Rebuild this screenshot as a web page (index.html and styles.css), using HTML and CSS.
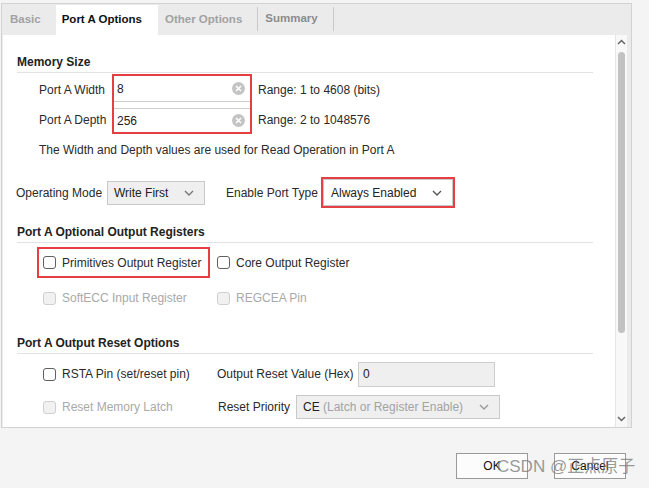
FILE: index.html
```html
<!DOCTYPE html>
<html lang="en">
<head>
    <meta charset="UTF-8">
    <title>Block Memory Generator - Port A Options</title>
    <link rel="stylesheet" href="styles.css">
</head>
<body>
    <div class="dialog">
        <div class="tabs">
            <div class="tab dim">Basic</div>
            <div class="tab active">Port A Options</div>
            <div class="tab dim">Other Options</div>
            <div class="tab dim2">Summary</div>
        </div>

        <div class="pane">
            <div class="content">
                <h2 class="section">Memory Size</h2>
                <div class="mem-grid">
                    <span class="lbl row1">Port A Width</span>
                    <div class="hl mem-box">
                        <div class="field tall">8
                            <svg class="clear" width="13" height="13" viewBox="0 0 13 13"><circle cx="6.5" cy="6.5" r="6.5" fill="#c4c4c4"/><path d="M4 4L9 9M9 4L4 9" stroke="#fff" stroke-width="1.6"/></svg>
                        </div>
                        <div class="field">256
                            <svg class="clear" width="13" height="13" viewBox="0 0 13 13"><circle cx="6.5" cy="6.5" r="6.5" fill="#c4c4c4"/><path d="M4 4L9 9M9 4L4 9" stroke="#fff" stroke-width="1.6"/></svg>
                        </div>
                    </div>
                    <span class="range row1">Range: 1 to 4608 (bits)</span>
                    <span class="lbl row2">Port A Depth</span>
                    <span class="range row2">Range: 2 to 1048576</span>
                </div>
                <p class="note">The Width and Depth values are used for Read Operation in Port A</p>

                <div class="mode-row">
                    <span class="mode-lbl">Operating Mode</span>
                    <div class="select grey mode-sel">Write First
                        <svg class="chev" width="10" height="6" viewBox="0 0 10 6"><path d="M1 1L5 5L9 1" fill="none" stroke="#777" stroke-width="1.4"/></svg>
                    </div>
                    <span class="port-lbl">Enable Port Type</span>
                    <div class="hl port-box">
                        <div class="select white">Always Enabled
                            <svg class="chev" width="10" height="6" viewBox="0 0 10 6"><path d="M1 1L5 5L9 1" fill="none" stroke="#555" stroke-width="1.4"/></svg>
                        </div>
                    </div>
                </div>

                <h2 class="section sec2">Port A Optional Output Registers</h2>
                <div class="opt-grid">
                    <div class="hl chk-cell boxed"><span class="chk"></span>Primitives Output Register</div>
                    <div class="chk-cell"><span class="chk"></span>Core Output Register</div>
                    <div class="chk-cell pad off"><span class="chk"></span>SoftECC Input Register</div>
                    <div class="chk-cell off"><span class="chk"></span>REGCEA Pin</div>
                </div>

                <h2 class="section sec3">Port A Output Reset Options</h2>
                <div class="reset-grid">
                    <div class="chk-cell pad"><span class="chk"></span>RSTA Pin (set/reset pin)</div>
                    <div class="pair">
                        <span class="rv-lbl">Output Reset Value (Hex)</span>
                        <div class="field grey rv-field">0</div>
                    </div>
                    <div class="chk-cell pad off"><span class="chk"></span>Reset Memory Latch</div>
                    <div class="pair">
                        <span class="rp-lbl">Reset Priority</span>
                        <div class="select grey rp-sel"><span>CE <span class="muted">(Latch or Register Enable)</span></span>
                            <svg class="chev" width="10" height="6" viewBox="0 0 10 6"><path d="M1 1L5 5L9 1" fill="none" stroke="#999" stroke-width="1.4"/></svg>
                        </div>
                    </div>
                </div>
            </div>

            <div class="scrollbar">
                <div class="sb-arrow">
                    <svg width="9" height="6" viewBox="0 0 9 6"><path d="M1 5L4.5 1.5L8 5" fill="none" stroke="#666" stroke-width="1.5"/></svg>
                </div>
                <div class="thumb"></div>
                <div class="sb-fill"></div>
                <div class="sb-arrow">
                    <svg width="9" height="6" viewBox="0 0 9 6"><path d="M1 1L4.5 4.5L8 1" fill="none" stroke="#666" stroke-width="1.5"/></svg>
                </div>
            </div>
        </div>
    </div>

    <div class="footer">
        <button class="btn">OK</button>
        <button class="btn">Cancel</button>
    </div>

    <div class="watermark">CSDN @正点原子</div>
</body>
</html>
```

FILE: styles.css
```css
body {
    margin: 0;
    background: #f4f4f4;
    font-family: 'Liberation Sans', Arial, sans-serif;
    font-size: 12px;
    color: #2a2a2a;
    position: relative;
    width: 649px;
    height: 488px;
    overflow: hidden;
}

.dialog {
    margin: 3px 0 0 1px;
    width: 629px;
    border: 1px solid #d2d2d2;
    background: #ebebeb;
}

/* tabs */
.tabs {
    display: flex;
    height: 31px;
    padding-left: 1px;
}

.tab {
    margin-top: 1px;
    height: 30px;
    line-height: 28px;
    padding: 0 15px 0 7px;
    font-weight: bold;
    font-size: 11.5px;
    color: #111;
    position: relative;
}

.tab.dim { color: #a2a2a2; }
.tab.dim2 { color: #8c8c8c; }

.tab.active {
    background: #fff;
    padding: 0 16px 0 6px;
}

.tab.dim + .tab.dim2,
.tab.dim2 {
    border-left: 1px solid #c8c8c8;
    border-right: 1px solid #c8c8c8;
    height: 24px;
    margin-top: 3px;
    line-height: 22px;
}

/* main pane */
.pane {
    display: flex;
    height: 392px;
    padding: 0 4px 0 1px;
}

.content {
    flex: 1;
    background: #fff;
    padding: 19px 22px 0 14px;
    overflow: hidden;
}

.section {
    margin: 0;
    font-size: 12px;
    font-weight: bold;
    line-height: 16px;
    padding-bottom: 2px;
    border-bottom: 1px solid #e2e2e2;
    color: #222;
}

.sec2 { margin-top: 16px; }
.sec3 { margin-top: 25px; }

.hl {
    border: 2px solid #e53e45;
}

/* memory size */
.mem-grid {
    margin: 1px 0 0 22px;
    display: grid;
    grid-template-columns: 73px 140px auto;
    grid-template-rows: 32px 28px;
    align-items: center;
}

.lbl.row1, .range.row1 { grid-row: 1; }
.lbl.row2, .range.row2 { grid-row: 2; }
.lbl { grid-column: 1; }
.range { grid-column: 3; padding-left: 6px; }

.mem-box {
    grid-column: 2;
    grid-row: 1 / 3;
    align-self: stretch;
    display: flex;
    flex-direction: column;
    gap: 6px;
}

.field {
    display: flex;
    align-items: center;
    justify-content: space-between;
    height: 23px;
    padding: 0 5px 0 3px;
    border: 1px solid #cdcdcd;
    background: #fff;
    color: #222;
}

.mem-box .field {
    border-left: none;
    border-right: none;
}

.mem-box .field:first-child { border-top: none; }
.mem-box .field:last-child { border-bottom: none; }

.field.tall { height: 26px; }

.note {
    margin: 8px 0 0 22px;
    line-height: 16px;
}

/* mode row */
.mode-row {
    margin-top: 19px;
    height: 31px;
    display: flex;
    align-items: center;
}

.mode-lbl { width: 91px; margin-left: -1px; }
.port-lbl { width: 95px; margin-left: 21px; }

.select {
    display: flex;
    align-items: center;
    justify-content: space-between;
    box-sizing: border-box;
    border: 1px solid #c9c9c9;
    padding: 0 10px 0 6px;
    color: #222;
}

.select.grey { background: #efefef; }
.select.white { background: #fff; height: 27px; padding: 0 10px 0 7px; }

.mode-sel { width: 98px; height: 24px; }
.port-box { width: 134px; height: 31px; box-sizing: border-box; }

/* checkboxes */
.opt-grid, .reset-grid {
    margin-left: 20px;
    display: grid;
    grid-template-columns: 173px 1fr;
    column-gap: 7px;
    row-gap: 8px;
    align-items: center;
}

.opt-grid {
    margin-top: 4px;
    grid-template-rows: 31px 24px;
}

.reset-grid {
    margin-top: 7px;
    grid-template-rows: 26px 24px;
}

.chk-cell {
    display: flex;
    align-items: center;
    gap: 6px;
    height: 100%;
    box-sizing: border-box;
}

.chk-cell.pad { padding-left: 6px; }
.chk-cell.boxed { padding-left: 4px; }

.chk {
    width: 11px;
    height: 11px;
    border: 1px solid #606060;
    border-radius: 3px;
    background: #fff;
    flex-shrink: 0;
}

.chk-cell.off { color: #a9a9a9; }
.chk-cell.off .chk { border-color: #cfcfcf; background: #f1f1f1; }

.pair {
    display: flex;
    align-items: center;
    height: 100%;
}

.rv-lbl { width: 141px; }
.rv-field { width: 137px; height: 25px; box-sizing: border-box; background: #efefef; padding-left: 4px; }
.rp-lbl { width: 78px; padding-left: 1px; }
.rp-sel { width: 204px; height: 24px; padding-left: 6px; }
.muted { color: #a3a3a3; }

/* scrollbar */
.scrollbar {
    width: 11px;
    border-left: 1px solid #e4e4e4;
    background: #f8f8f8;
    display: flex;
    flex-direction: column;
    align-items: center;
}

.sb-arrow {
    height: 14px;
    display: flex;
    align-items: center;
}

.sb-arrow:last-child { margin-bottom: 1px; }

.thumb {
    margin-top: 3px;
    width: 7px;
    height: 281px;
    border-radius: 4px;
    background: #c2c2c2;
}

.sb-fill { flex: 1; }

/* footer */
.footer {
    width: 626px;
    margin-top: 25px;
    display: flex;
    justify-content: flex-end;
    gap: 26px;
}

.btn {
    width: 72px;
    height: 26px;
    border: 1px solid #9a9a9a;
    background: #fcfcfc;
    font-family: 'Liberation Sans', Arial, sans-serif;
    font-size: 12px;
    color: #111;
    padding: 0;
}

.watermark {
    position: absolute;
    left: 497px;
    top: 456px;
    font-family: 'Liberation Sans', 'Noto Sans CJK SC', sans-serif;
    font-size: 17px;
    line-height: 22px;
    color: rgba(120, 120, 120, 0.75);
}
```
